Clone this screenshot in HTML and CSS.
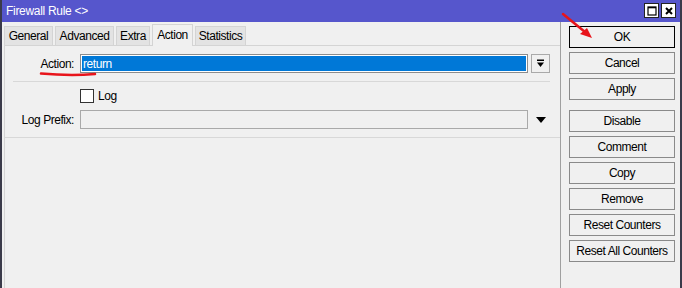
FILE: index.html
```html
<!DOCTYPE html>
<html lang="en">

<head>
    <meta charset="UTF-8">
    <title>Firewall Rule</title>
    <link rel="stylesheet" href="styles.css">
</head>

<body>
    <div class="window">
        <div class="titlebar">
            <span class="title">Firewall Rule &lt;&gt;</span>
            <div class="winbtns">
                <span class="winbtn"><svg width="12" height="12" viewBox="0 0 12 12"><rect x="2" y="2" width="8" height="8" fill="none" stroke="#000" stroke-width="1.2"/><line x1="2" y1="2.6" x2="10" y2="2.6" stroke="#000" stroke-width="1.4"/></svg></span>
                <span class="winbtn"><svg width="12" height="12" viewBox="0 0 12 12"><path d="M3 3 L9 9 M9 3 L3 9" stroke="#000" stroke-width="2"/></svg></span>
            </div>
        </div>
        <div class="main">
            <div class="left">
                <ul class="tabs">
                    <li class="t1">General</li>
                    <li class="t2">Advanced</li>
                    <li class="t3">Extra</li>
                    <li class="t4 now">Action</li>
                    <li class="t5">Statistics</li>
                </ul>
                <div class="panel">
                    <div class="row">
                        <label class="lbl">Action:</label>
                        <div class="field sel"><span class="seltext">return</span></div>
                        <span class="dropbtn"><svg width="9" height="9" viewBox="0 0 9 9"><rect x="1" y="0.5" width="7" height="1.5" fill="#000"/><path d="M1 3.5 H8 L4.5 8 Z" fill="#000"/></svg></span>
                    </div>
                    <div class="sep"></div>
                    <div class="row check">
                        <span class="lbl"></span>
                        <span class="box"></span>
                        <span>Log</span>
                    </div>
                    <div class="row">
                        <label class="lbl">Log Prefix:</label>
                        <div class="field"></div>
                        <span class="droparrow"><svg width="10" height="6" viewBox="0 0 10 6"><path d="M0 0 H10 L5 6 Z" fill="#000"/></svg></span>
                    </div>
                    <div class="sep wide"></div>
                </div>
            </div>
            <div class="right">
                <button class="btn ok">OK</button>
                <button class="btn">Cancel</button>
                <button class="btn">Apply</button>
                <button class="btn gap">Disable</button>
                <button class="btn">Comment</button>
                <button class="btn">Copy</button>
                <button class="btn">Remove</button>
                <button class="btn">Reset Counters</button>
                <button class="btn">Reset All Counters</button>
            </div>
        </div>
        <svg class="marks" width="682" height="288" viewBox="0 0 682 288">
            <path d="M156 43.5 Q170 44.5 183 43" stroke="#e8141b" stroke-width="3" fill="none" stroke-linecap="round"/>
            <path d="M41 73.5 Q70 76 95 74" stroke="#e8141b" stroke-width="2.5" fill="none" stroke-linecap="round"/>
            <path d="M563 14 L585 32" stroke="#e8141b" stroke-width="2.5" fill="none" stroke-linecap="round"/>
            <path d="M592 38 L580 34 L587 28 Z" fill="#e8141b"/>
        </svg>
    </div>
</body>

</html>
```

FILE: styles.css
```css
body,
div,
ul,
li {
    margin: 0;
    padding: 0;
}

ul {
    list-style-type: none;
}

body {
    background: #f0f0f0;
    font: 12px/14px "Liberation Sans", Arial, sans-serif;
    letter-spacing: -0.45px;
    color: #000;
}

.window {
    position: relative;
    width: 678px;
    height: 288px;
    background: #f0f0f0;
    border-left: 2px solid #3a3a4a;
    border-right: 2px solid #3a3a4a;
    display: flex;
    flex-direction: column;
}

.titlebar {
    height: 22px;
    background: #5656cc;
    color: #fff;
    display: flex;
    align-items: center;
    justify-content: space-between;
    padding: 0 4px 0 4px;
}

.title {
    font-size: 12px;
    letter-spacing: -0.3px;
}

.winbtns {
    display: flex;
    gap: 2px;
    margin-top: -1px;
}

.winbtn {
    width: 13px;
    height: 13px;
    background: #fff;
    border: 1px solid #222;
    display: flex;
    align-items: center;
    justify-content: center;
}

.main {
    flex: 1;
    display: flex;
}

.left {
    width: 556px;
    border-right: 1px solid #a0a0a0;
    padding: 2px 0 0 2px;
    display: flex;
    flex-direction: column;
}

.tabs {
    display: flex;
    gap: 2px;
    padding-top: 2px;
    height: 19px;
    align-items: flex-start;
}

.tabs li {
    height: 18px;
    line-height: 19px;
    text-align: center;
    background: #e3e3e3;
    border: 1px solid #d4d4d4;
    border-bottom: none;
    box-sizing: border-box;
    height: 19px;
}

.tabs .t1 { width: 49px; }
.tabs .t2 { width: 59px; }
.tabs .t3 { width: 34px; }
.tabs .t4 { width: 41px; }
.tabs .t5 { width: 51px; }

.tabs li.now {
    margin-top: -2px;
    height: 22px;
    line-height: 21px;
    background: #f0f0f0;
    position: relative;
    z-index: 1;
}

.panel {
    flex: 1;
    border: 1px solid #d4d4d4;
    border-right: none;
    border-bottom: none;
    padding-top: 8px;
}

.row {
    display: flex;
    align-items: center;
    height: 19px;
}

.lbl {
    width: 69px;
    margin-right: 6px;
    text-align: right;
}

.field {
    width: 446px;
    height: 17px;
    border: 1px solid #a9a9a9;
    background: #f0f0f0;
}

.field.sel {
    background: #0078d7;
    border-color: #8c8c8c;
    box-shadow: inset 0 0 0 1px #fff;
    display: flex;
    align-items: center;
}

.seltext {
    color: #fff;
    padding-left: 2px;
}

.dropbtn {
    width: 17px;
    height: 17px;
    margin-left: 3px;
    border: 1px solid #a9a9a9;
    display: flex;
    align-items: center;
    justify-content: center;
}

.droparrow {
    margin-left: 8px;
    display: flex;
}

.sep {
    height: 1px;
    background: #d8d8d8;
    margin: 8px 8px 7px 8px;
    width: 537px;
}

.sep.wide {
    width: auto;
    margin: 8px 0 0 0;
}

.row.check {
    height: 14px;
    margin-bottom: 7px;
}

.box {
    width: 12px;
    height: 12px;
    border: 1px solid #333;
    background: #fff;
    margin-right: 4px;
}

.right {
    flex: 1;
    padding: 4px 0 0 8px;
    display: flex;
    flex-direction: column;
    gap: 4px;
}

.btn {
    width: 106px;
    height: 22px;
    background: #f0f0f0;
    border: 1px solid #8a8a8a;
    font: 12px "Liberation Sans", Arial, sans-serif;
    letter-spacing: -0.45px;
    white-space: nowrap;
    color: #000;
    padding: 0;
}

.btn.ok {
    border-color: #000;
}

.btn.gap {
    margin-top: 6px;
}

.marks {
    position: absolute;
    left: -2px;
    top: 0;
    pointer-events: none;
}
```
